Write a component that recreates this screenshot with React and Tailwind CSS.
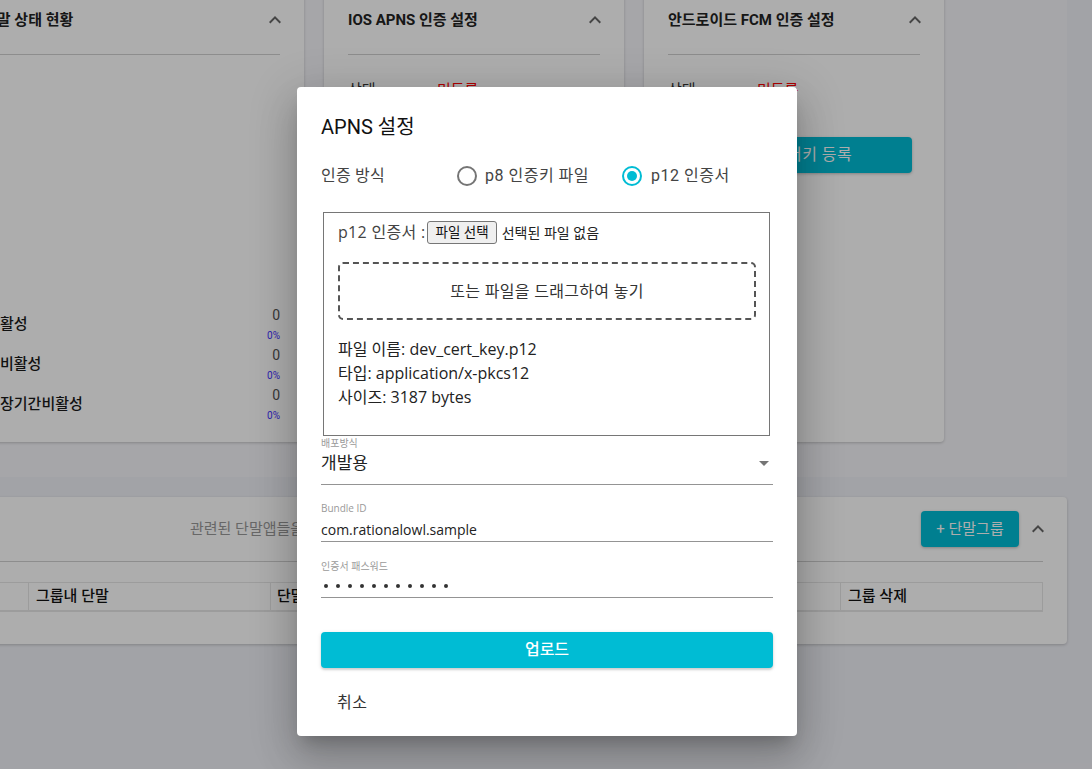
import React from "react";

const ExpandLess = ({ className = "" }) => (
  <svg viewBox="0 0 24 24" width="24" height="24" fill="currentColor" className={className}>
    <path d="M12 8l-6 6 1.41 1.41L12 10.83l4.59 4.58L18 14z" />
  </svg>
);

const ArrowDrop = ({ className = "" }) => (
  <svg viewBox="0 0 24 24" width="24" height="24" fill="currentColor" className={className}>
    <path d="M7 10l5 5 5-5z" />
  </svg>
);

const Radio = ({ checked }) => (
  <svg viewBox="0 0 20 20" width="20" height="20" className="shrink-0">
    <circle cx="10" cy="10" r="9" fill="none" stroke={checked ? "#00bcd4" : "#757575"} strokeWidth="2" />
    {checked && <circle cx="10" cy="10" r="5" fill="#00bcd4" />}
  </svg>
);

function CardHeader({ title }) {
  return (
    <>
      <div className="h-10 flex items-center justify-between">
        <span className="text-[15px] leading-6 font-bold text-[#222]">{title}</span>
        <ExpandLess className="-mr-[7px] text-[#666]" />
      </div>
      <div className="mt-[14px] border-t border-[#d0d0d0]" />
    </>
  );
}

function StatRow({ label }) {
  return (
    <div className="h-10 flex items-center justify-between">
      <span className="pl-[17px] text-[15px] leading-6 font-medium text-[#1a1a1a]">{label}</span>
      <div className="flex flex-col items-end">
        <span className="text-[14px] leading-[18px] text-[#555]">0</span>
        <span className="mt-[5px] text-[10px] leading-[14px] text-[#4433ff]">0%</span>
      </div>
    </div>
  );
}

export default function App() {
  return (
    <div className="relative w-[1092px] h-[769px] overflow-hidden bg-[#eff0f6] font-['Roboto','Noto_Sans_CJK_KR',sans-serif]">
      <div className="-ml-[61px] -mt-[8px] w-[1128px]">
        {/* top area */}
        <div className="bg-[#f5f5f9] px-5 pb-[35px] flex gap-5 items-stretch">
          <div className="w-[345px] bg-white rounded-[4px] shadow-[0_1px_3px_rgba(0,0,0,0.2)] px-6 pt-2 pb-[18px] flex flex-col">
            <CardHeader title="단말 상태 현황" />
            <div className="h-[249px]" />
            <StatRow label="활성" />
            <StatRow label="비활성" />
            <StatRow label="장기간비활성" />
          </div>
          <div className="w-[300px] bg-white rounded-[4px] shadow-[0_1px_3px_rgba(0,0,0,0.2)] px-6 pt-2 flex flex-col">
            <CardHeader title="IOS APNS 인증 설정" />
            <div className="mt-[23px] h-6 flex items-center text-[15px]">
              <span className="w-[89px] text-[#333]">상태</span>
              <span className="text-[#ff0000]">미등록</span>
            </div>
          </div>
          <div className="w-[300px] bg-white rounded-[4px] shadow-[0_1px_3px_rgba(0,0,0,0.2)] px-6 pt-2 flex flex-col">
            <CardHeader title="안드로이드 FCM 인증 설정" />
            <div className="mt-[23px] h-6 flex items-center text-[15px]">
              <span className="w-[89px] text-[#333]">상태</span>
              <span className="text-[#ff0000]">미등록</span>
            </div>
            <div className="mt-[35px] flex justify-end pr-[8px]">
              <button className="w-[212px] h-9 rounded-[4px] bg-[#00bcd4] text-white text-[16px] tracking-[0.5px] pl-[12px] shadow-[0_1px_3px_rgba(0,0,0,0.25)]">
                서버키 등록
              </button>
            </div>
          </div>
        </div>

        {/* bottom card */}
        <div className="mt-5 bg-white rounded-[4px] shadow-[0_1px_3px_rgba(0,0,0,0.2)] px-6 pt-[14px] pb-8">
          <div className="h-9 flex items-center">
            <div className="flex-1 pl-[227px] text-[15px] leading-6 text-[#999]">관련된 단말앱들을 그룹으로 관리할 수 있습니다.</div>
            <button className="h-9 w-[98px] rounded-[4px] bg-[#00bcd4] text-white text-[15px] shadow-[0_1px_3px_rgba(0,0,0,0.25)]">
              + 단말그룹
            </button>
            <ExpandLess className="ml-[7px] -mr-[7px] text-[#666]" />
          </div>
          <div className="mt-[14px] border-t border-[#d0d0d0]" />
          <div className="mt-5 grid grid-cols-[65px_242px_285px_285px_204px] border border-[#e6e6e6] border-b-2 h-[30px] text-[15px] font-medium text-[#111]">
            <div className="border-r border-[#e6e6e6]" />
            <div className="border-r border-[#e6e6e6] pl-[7px] flex items-center">그룹내 단말</div>
            <div className="border-r border-[#e6e6e6] pl-[6px] flex items-center">단말앱 수</div>
            <div className="border-r border-[#e6e6e6] pl-[7px] flex items-center">그룹 수정</div>
            <div className="pl-[7px] flex items-center">그룹 삭제</div>
          </div>
        </div>
      </div>

      {/* backdrop + dialog */}
      <div className="absolute inset-0 bg-black/[0.32] flex justify-center items-start pt-[87px] pl-[2px]">
        <div className="w-[500px] bg-white rounded-[4px] shadow-[0px_11px_15px_-7px_rgba(0,0,0,0.2),0px_24px_38px_3px_rgba(0,0,0,0.14),0px_9px_46px_8px_rgba(0,0,0,0.12)] px-6 pt-6 pb-[15px] flex flex-col">
          <h2 className="text-[20px] leading-8 font-normal text-[#111]">APNS 설정</h2>

          <div className="mt-[17px] h-8 flex items-center text-[16px] tracking-[0.2px] text-[#444]">
            <span className="w-[136px]">인증 방식</span>
            <label className="w-[165px] flex items-center gap-2">
              <Radio checked={false} />
              <span className="tracking-[0.5px]">p8 인증키 파일</span>
            </label>
            <label className="flex items-center gap-[9px]">
              <Radio checked={true} />
              <span className="tracking-[0.5px]">p12 인증서</span>
            </label>
          </div>

          <div className="mt-5 ml-[2px] mr-[3px] border border-[#767676] pl-[14px] pr-[13px] pt-[7px] pb-[26px] font-['Open_Sans','Noto_Sans_CJK_KR',sans-serif]">
            <div className="h-6 flex items-center text-[16px] text-[#444]">
              <span className="tracking-[0.3px]">p12 인증서 :</span>
              <span className="ml-[2px] h-[23px] px-[7px] border border-[#767676] rounded-[3px] bg-[#efefef] text-[13.5px] text-[#111] flex items-center">
                파일 선택
              </span>
              <span className="ml-[5px] text-[14px] text-[#222]">선택된 파일 없음</span>
            </div>
            <div className="mt-[18px] h-[58px] border-2 border-dashed border-[#555] rounded-[5px] flex items-center justify-center text-[16px] tracking-[0.3px] text-[#333]">
              또는 파일을 드래그하여 놓기
            </div>
            <div className="mt-[17px] text-[16px] leading-6 text-[#222]">
              <div>파일 이름: dev_cert_key.p12</div>
              <div>타입: application/x-pkcs12</div>
              <div>사이즈: 3187 bytes</div>
            </div>
          </div>

          <div className="font-['Open_Sans','Noto_Sans_CJK_KR',sans-serif]">
            <div className="mt-[1px] text-[10px] leading-[12px] text-[#9a9a9a]">배포방식</div>
            <div className="mt-[2px] h-[34px] border-b border-[#949494] flex items-start justify-between">
              <span className="text-[17px] leading-6 text-[#222]">개발용</span>
              <ArrowDrop className="-mr-[3px] text-[#757575]" />
            </div>

            <div className="mt-[17px] text-[10px] leading-[12px] text-[#9a9a9a]">Bundle ID</div>
            <div className="mt-[3px] h-[25px] border-b border-[#949494]">
              <span className="text-[14px] leading-5 text-[#222]">com.rationalowl.sample</span>
            </div>

            <div className="mt-[18px] text-[10px] leading-[12px] text-[#9a9a9a]">인증서 패스워드</div>
            <div className="mt-[3px] h-[23px] border-b border-[#949494] flex items-center pl-[3px] pb-[1px] gap-[8px]">
              {Array.from({ length: 11 }).map((_, i) => (
                <span key={i} className="w-[4px] h-[4px] rounded-full bg-[#333]" />
              ))}
            </div>
          </div>

          <button className="mt-[34px] h-9 rounded-[4px] bg-[#00bcd4] text-white text-[16px] font-medium shadow-[0_2px_2px_rgba(0,0,0,0.12),0_1px_4px_rgba(0,0,0,0.12)]">
            업로드
          </button>
          <button className="mt-[17px] self-start h-9 px-4 text-[16px] tracking-[0.5px] text-[#333]">취소</button>
        </div>
      </div>
    </div>
  );
}
